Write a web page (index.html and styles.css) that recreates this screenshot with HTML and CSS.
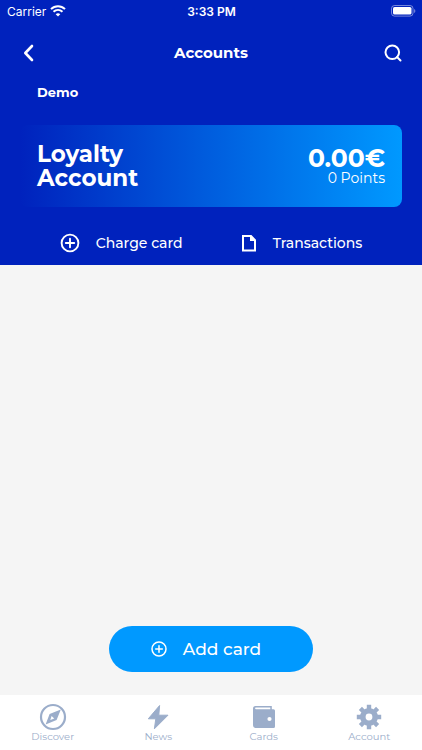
FILE: index.html
```html
<!DOCTYPE html>
<html lang="en">
<head>
<meta charset="utf-8">
<meta name="viewport" content="width=device-width, initial-scale=1">
<title>Accounts</title>
<link rel="stylesheet" href="styles.css">
</head>
<body>
<div class="app">
  <header class="top">
    <div class="status">
      <div class="carrier">
        <span>Carrier</span>
        <svg width="16" height="12" viewBox="0 0 16 12" fill="none" stroke="#fff" stroke-width="2" aria-hidden="true">
          <path d="M1 4.1C5 .2 11 .2 15 4.1"/>
          <path d="M3.5 6.8c2.6-2.4 6.4-2.4 9 0"/>
          <path d="M8 11.6 5.7 9.2c1.3-1.2 3.3-1.2 4.6 0z" fill="#fff" stroke="none"/>
        </svg>
      </div>
      <span class="time">3:33 PM</span>
      <svg class="battery" width="25" height="12" viewBox="0 0 25 12" aria-hidden="true">
        <rect x=".5" y=".5" width="21.5" height="10.6" rx="3" fill="none" stroke="#fff" stroke-opacity=".45"/>
        <rect x="2" y="2" width="18.5" height="7.6" rx="1.6" fill="#fff"/>
        <path d="M23.2 4v4c1.5-.6 1.5-3.400 0-4z" fill="#fff" fill-opacity=".5"/>
      </svg>
    </div>
    <nav class="titlebar">
      <button class="icon-button" aria-label="Back">
        <svg width="18" height="18" viewBox="0 0 18 18" fill="none" stroke="#fff" stroke-width="2.6" stroke-linecap="round" stroke-linejoin="round"><path d="M12 2 5.300 9l6.700 7"/></svg>
      </button>
      <h1>Accounts</h1>
      <button class="icon-button" aria-label="Search">
        <svg width="18" height="18" viewBox="0 0 18 18" fill="none" stroke="#fff" stroke-width="2" stroke-linecap="round"><circle cx="8.300" cy="8.300" r="6.800"/><path d="m13 13 3.500 3.500"/></svg>
      </button>
    </nav>
    <p class="owner">Demo</p>
    <section class="card">
      <h2>Loyalty<br>Account</h2>
      <div class="balance">
        <strong>0.00€</strong>
        <span>0 Points</span>
      </div>
    </section>
    <div class="actions">
      <button class="action">
        <svg width="20" height="20" viewBox="0 0 20 20" fill="none" stroke="#fff" stroke-width="1.900" aria-hidden="true"><circle cx="10" cy="10" r="8.400"/><path d="M10 5.800v8.400M5.800 10h8.400" stroke-linecap="round"/></svg>
        Charge card
      </button>
      <button class="action">
        <svg width="16" height="20" viewBox="0 0 16 20" aria-hidden="true"><path d="M2 3h8l4 4.200V17.600H2z" fill="none" stroke="#fff" stroke-width="2"/><path d="M9 2.400v5.600h6z" fill="#fff"/></svg>
        Transactions
      </button>
    </div>
  </header>
  <main class="content">
    <button class="add">
      <svg width="16" height="16" viewBox="0 0 16 16" fill="none" stroke="#fff" stroke-width="1.500" aria-hidden="true"><circle cx="8" cy="8" r="7"/><path d="M8 4.700v6.600M4.700 8h6.600" stroke-linecap="round"/></svg>
      Add card
    </button>
  </main>
  <nav class="tabs">
    <a href="#discover">
      <svg width="28" height="28" viewBox="0 0 28 28" aria-hidden="true"><circle cx="14" cy="14" r="12" fill="none" stroke="currentColor" stroke-width="2.200"/><path fill="currentColor" fill-rule="evenodd" d="M21.800 6.400 17.600 17 6.600 21.400 10.600 10.900zM12.600 13l-1.300 4 4-1.500z"/></svg>
      <span>Discover</span>
    </a>
    <a href="#news">
      <svg width="28" height="28" viewBox="0 0 28 28" aria-hidden="true"><path fill="currentColor" stroke="currentColor" stroke-linejoin="round" d="M15.600 2.500 4.300 15.800h7.500l-1.400 10L24 12.200h-9.200z"/></svg>
      <span>News</span>
    </a>
    <a href="#cards">
      <svg width="28" height="28" viewBox="0 0 28 28" aria-hidden="true"><path fill="currentColor" fill-rule="evenodd" d="M5.500 3h16.300v3.300H20.300V4.500H5.800c-1 0-1 1.700 0 1.700H23.500q1.500 0 1.500 1.500v15.800q0 1.500-1.500 1.500H6q-3 0-3-3V5.500Q3 3 5.500 3zM19.500 13.900a2.100 2.100 0 1 0 0 4.200 2.100 2.100 0 0 0 0-4.200z"/></svg>
      <span>Cards</span>
    </a>
    <a href="#account">
      <svg width="28" height="28" viewBox="0 0 28 28" aria-hidden="true">
        <circle cx="14" cy="14" r="6.200" fill="none" stroke="currentColor" stroke-width="5.600"/>
        <g stroke="currentColor" stroke-width="4.400"><path d="M14 1.800V7M14 21v5.200M1.800 14H7M21 14h5.200"/><path d="m5.400 5.400 3.600 3.600M19 19l3.600 3.600M5.400 22.600 9 19M19 9l3.600-3.600"/></g>
      </svg>
      <span>Account</span>
    </a>
  </nav>
</div>
</body>
</html>
```

FILE: styles.css
```css
* {
  box-sizing: border-box;
}

body {
  margin: 0;
  color: #fff;
  font-family: Montserrat, Inter, sans-serif;
}

h1, h2, p {
  margin: 0;
}

button {
  padding: 0;
  border: 0;
  background: none;
  color: inherit;
  font: inherit;
}

svg {
  display: block;
  flex: none;
}

.app {
  display: flex;
  flex-direction: column;
  min-height: 100vh;
  background: #f5f5f5;
}

.top {
  padding-bottom: 12px;
  background: #0022bd;
}

.status {
  display: grid;
  grid-template-columns: 1fr auto 1fr;
  align-items: center;
  height: 22px;
  padding: 0 6px 0 7px;
  font-family: Inter, sans-serif;
  font-size: 12px;
}

.carrier {
  display: flex;
  align-items: center;
  gap: 4px;
}

.time {
  font-weight: 600;
}

.battery {
  justify-self: end;
}

.titlebar {
  display: flex;
  align-items: center;
  justify-content: space-between;
  height: 62px;
  padding: 0 20px;
}

.icon-button {
  display: grid;
  place-items: center;
}

.titlebar h1 {
  font-size: 15px;
  line-height: 20px;
  font-weight: 700;
}

.owner {
  padding: 0 37px;
  font-size: 13px;
  line-height: 16px;
  font-weight: 700;
}

.card {
  display: flex;
  align-items: center;
  justify-content: space-between;
  height: 82px;
  margin: 25px 20px 0;
  padding: 0 17px;
  border-radius: 8px;
  background: linear-gradient(90deg, #0022bd, #0099ff);
}

.card h2 {
  font-size: 23px;
  line-height: 24px;
  font-weight: 700;
}

.balance {
  display: grid;
  text-align: right;
}

.balance strong {
  font-size: 25px;
  line-height: 24px;
}

.balance span {
  font-size: 14px;
  line-height: 16px;
}

.actions {
  display: flex;
  justify-content: center;
  gap: 58px;
  margin-top: 26px;
}

.action {
  display: flex;
  align-items: center;
  gap: 16px;
  font-size: 14px;
  line-height: 20px;
  font-weight: 500;
}

.content {
  display: flex;
  flex: 1;
  align-items: flex-end;
  justify-content: center;
  padding-bottom: 23px;
}

.add {
  display: flex;
  align-items: center;
  justify-content: center;
  gap: 16px;
  width: 204px;
  height: 46px;
  padding-right: 10px;
  border-radius: 23px;
  background: #0099ff;
  font-size: 17px;
  font-weight: 500;
}

.tabs {
  display: grid;
  grid-template-columns: repeat(4, 1fr);
  height: 55px;
  padding-top: 8px;
  background: #fff;
}

.tabs a {
  display: flex;
  flex-direction: column;
  align-items: center;
  color: #9badca;
  font-size: 10px;
  line-height: 12px;
  text-decoration: none;
}
```
